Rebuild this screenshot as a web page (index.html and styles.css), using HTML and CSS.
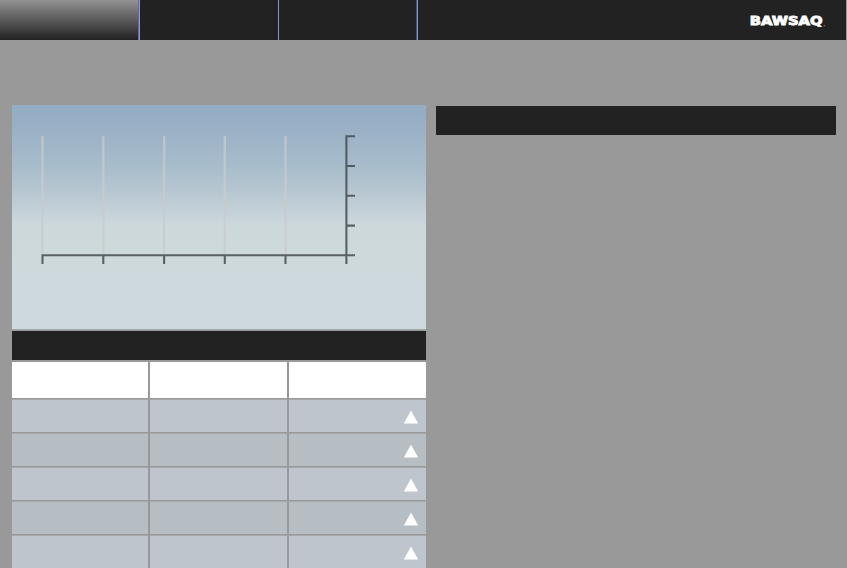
FILE: index.html
```html
<!DOCTYPE html>
<html lang="en">
<head>
<meta charset="utf-8">
<title>BAWSAQ</title>
<link rel="stylesheet" href="styles.css">
</head>
<body>
<nav class="nav">
  <div class="tab active"></div>
  <div class="tab second"></div>
  <div class="tab third"></div>
  <svg class="logo" width="80" height="16" viewBox="0 0 80 16">
    <text class="logo-text" x="1.7" y="12.6" textLength="72.8" lengthAdjust="spacingAndGlyphs">BAWSAQ</text>
    <circle cx="76.3" cy="13.7" r=".6" fill="#888"/>
  </svg>
</nav>
<main class="content">
  <section class="market">
    <svg class="chart" width="414" height="224" viewBox="0 0 414 224">
      <g fill="#c8cbcd" fill-opacity=".75">
        <rect x="29.3" y="31" width="2.4" height="118"/>
        <rect x="90.1" y="31" width="2.4" height="118"/>
        <rect x="150.9" y="31" width="2.4" height="118"/>
        <rect x="211.6" y="31" width="2.4" height="118"/>
        <rect x="272.3" y="31" width="2.4" height="118"/>
      </g>
      <path class="axis" d="M30.5 159V150.2H343M91.3 150.2V159M152.1 150.2V159M212.8 150.2V159M273.5 150.2V159M334.4 159V31.3H343M334.4 61H343M334.4 90.8H343M334.4 120.6H343"/>
    </svg>
    <div class="bar"></div>
    <div class="row head"><div></div><div></div><div></div></div>
    <div class="row"><div></div><div></div><div><svg class="up" viewBox="0 0 16 14"><path d="M8 .5 15.2 13.5H.8Z"/></svg></div></div>
    <div class="row alt"><div></div><div></div><div><svg class="up" viewBox="0 0 16 14"><path d="M8 .5 15.2 13.5H.8Z"/></svg></div></div>
    <div class="row"><div></div><div></div><div><svg class="up" viewBox="0 0 16 14"><path d="M8 .5 15.2 13.5H.8Z"/></svg></div></div>
    <div class="row alt"><div></div><div></div><div><svg class="up" viewBox="0 0 16 14"><path d="M8 .5 15.2 13.5H.8Z"/></svg></div></div>
    <div class="row"><div></div><div></div><div><svg class="up" viewBox="0 0 16 14"><path d="M8 .5 15.2 13.5H.8Z"/></svg></div></div>
  </section>
  <aside class="news"><div class="bar"></div></aside>
</main>
</body>
</html>
```
FILE: styles.css
```css
* { box-sizing: border-box; }
body {
  margin: 0;
  height: 568px;
  overflow: hidden;
  background: #999;
  font-family: "DejaVu Sans", sans-serif;
}
.nav {
  display: flex;
  width: 846px;
  height: 40px;
  background: #222;
}
.tab {
  width: 139px;
  border-right: 1px solid #8195d6;
}
.tab.active {
  width: 140px;
  border-right-color: #8b9ad0;
  background: linear-gradient(#929292, #222);
  box-shadow: inset -1px 0 #626d96;
}
.tab.third {
  box-shadow: inset -1px 0 #4a5373;
}
.logo {
  margin: 12px 18px 0 auto;
}
.logo-text {
  font-size: 12.2px;
  font-weight: bold;
  fill: #fff;
  stroke: #fff;
  stroke-width: .9px;
}
.content {
  display: flex;
  gap: 10px;
  padding: 65px 11px 0 12px;
}
.market {
  width: 414px;
  display: flex;
  flex-direction: column;
  gap: 2px;
}
.chart {
  display: block;
  background: linear-gradient(#93acc4 0%, #9bb1c6 12%, #a7bccb 27%, #b9c8d2 40%, #cdd8dc 54%, #ced9db 66%, #ced9de 80%, #ced9de 100%);
  box-shadow: 0 1px #a6a9aa;
}
.axis {
  fill: none;
  stroke: #454b4f;
  stroke-width: 2.1;
  stroke-opacity: .85;
}
.bar {
  height: 29px;
  background: #222;
}
.row {
  display: grid;
  grid-template-columns: 136px 137px 137px;
  gap: 2px;
  height: 32px;
}
.row div {
  background: #bec5cc;
  box-shadow: 0 -1px #a6a8aa;
}
.row.alt div {
  background: #b6bec4;
}
.row.head {
  height: 36px;
}
.row.head div {
  background: #fff;
  box-shadow: none;
}
.row div:last-child {
  display: flex;
  justify-content: flex-end;
  align-items: flex-start;
  padding: 10px 7px 0 0;
}
.up {
  width: 16px;
  height: 14px;
  fill: #fff;
}
.news {
  flex: 1;
  padding-top: 1px;
}
```
